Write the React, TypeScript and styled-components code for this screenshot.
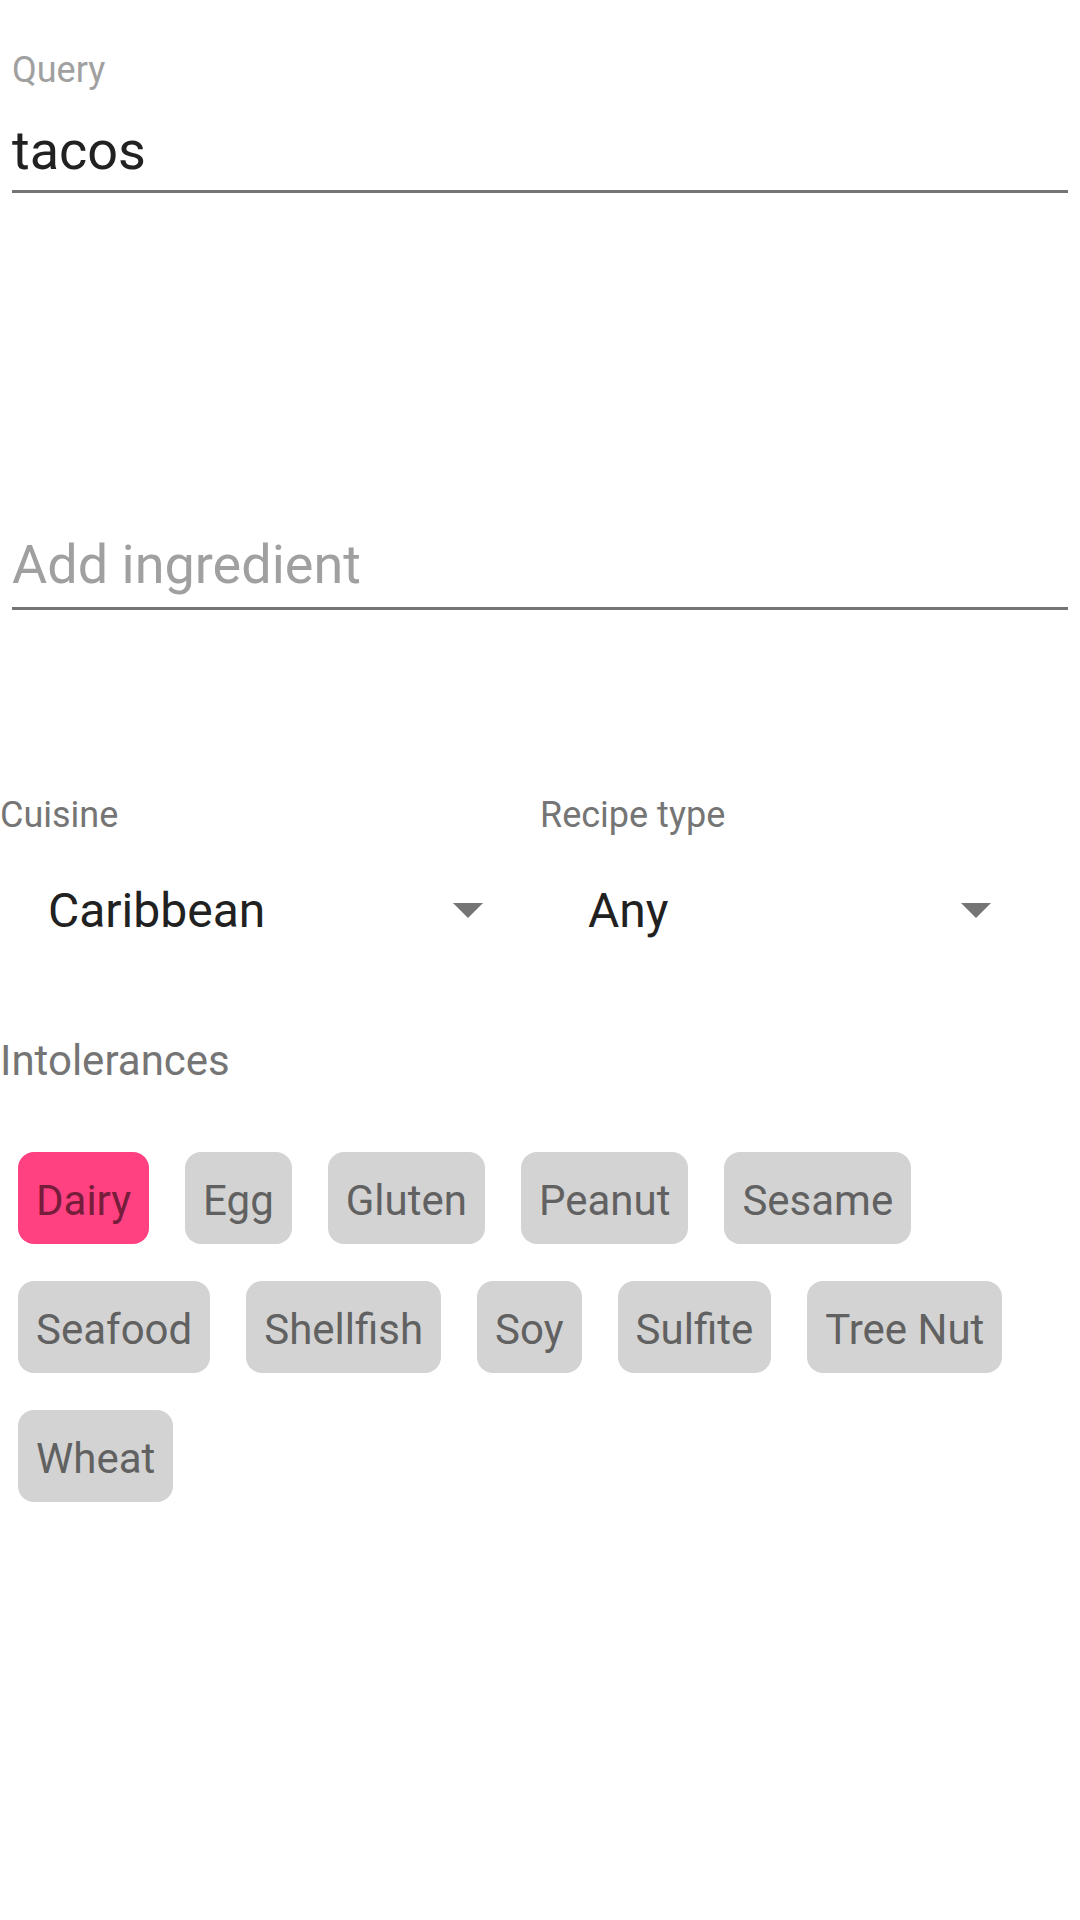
import styled, { createGlobalStyle } from 'styled-components'

const GlobalStyle = createGlobalStyle`
  html, body {
    margin: 0;
    padding: 0;
    background: #fff;
  }
  body {
    font-family: Roboto, "Liberation Sans", sans-serif;
    -webkit-font-smoothing: antialiased;
  }
`

const INTOLERANCES = [
  'Dairy', 'Egg', 'Gluten', 'Peanut', 'Sesame',
  'Seafood', 'Shellfish', 'Soy', 'Sulfite', 'Tree Nut',
  'Wheat',
]

const SELECTED = ['Dairy']

export default function App() {
  return (
    <>
      <GlobalStyle />
      <Page>
        <TextField $gap={46}>
          <FloatingLabel>Query</FloatingLabel>
          <InputBox $offset={25} $bottom={7}>
            <Input readOnly value="tacos" />
          </InputBox>
        </TextField>

        <TextField $gap={340}>
          <InputBox $offset={0} $bottom={10}>
            <Input readOnly placeholder="Add ingredient" />
          </InputBox>
        </TextField>

        <SpinnerRow>
          <SpinnerColumn>
            <SpinnerLabel>Cuisine</SpinnerLabel>
            <Spinner $width={483}>
              <SpinnerValue>Caribbean</SpinnerValue>
              <Caret />
            </Spinner>
          </SpinnerColumn>
          <SpinnerColumn>
            <SpinnerLabel>Recipe type</SpinnerLabel>
            <Spinner $width={451}>
              <SpinnerValue>Any</SpinnerValue>
              <Caret />
            </Spinner>
          </SpinnerColumn>
        </SpinnerRow>

        <SectionLabel>Intolerances</SectionLabel>
        <ChipGroup>
          {INTOLERANCES.map((name) => (
            <Chip key={name} $selected={SELECTED.includes(name)}>{name}</Chip>
          ))}
        </ChipGroup>
      </Page>
    </>
  )
}

function Caret() {
  return (
    <CaretIcon width="30" height="15" viewBox="0 0 30 15" aria-hidden>
      <polygon points="0,0 30,0 15,15" fill="#757575" />
    </CaretIcon>
  )
}

const Page = styled.main`
  display: flex;
  flex-direction: column;
  min-height: 1920px;
  background: #fff;
`

const TextField = styled.div<{ $gap: number }>`
  display: flex;
  flex-direction: column;
  padding: 0 12px;
  margin-top: ${({ $gap }) => $gap}px;
`

const FloatingLabel = styled.label`
  font-size: 36px;
  line-height: 48px;
  color: #a0a0a0;
`

const InputBox = styled.div<{ $offset: number; $bottom: number }>`
  margin-top: ${({ $offset }) => $offset}px;
  padding-bottom: ${({ $bottom }) => $bottom}px;
  border-bottom: 3px solid #757575;
`

const Input = styled.input`
  display: block;
  width: 100%;
  height: 64px;
  padding: 0;
  border: none;
  outline: none;
  background: transparent;
  font-family: Roboto, "Liberation Sans", sans-serif;
  font-size: 54px;
  line-height: 64px;
  color: #212121;

  &::placeholder {
    color: #a0a0a0;
    opacity: 1;
  }
`

const SpinnerRow = styled.div`
  display: grid;
  grid-template-columns: 540px 540px;
  margin-top: 181px;
`

const SpinnerColumn = styled.div`
  display: flex;
  flex-direction: column;
`

const SpinnerLabel = styled.span`
  font-size: 36px;
  line-height: 48px;
  color: #757575;
`

const Spinner = styled.div<{ $width: number }>`
  display: flex;
  align-items: center;
  justify-content: space-between;
  box-sizing: border-box;
  width: ${({ $width }) => $width}px;
  height: 96px;
  margin-top: 29px;
  padding-left: 48px;
`

const SpinnerValue = styled.span`
  margin-bottom: 10px;
  font-size: 48px;
  line-height: 80px;
  color: #212121;
`

const CaretIcon = styled.svg`
  display: block;
  flex: none;
  margin-bottom: 11px;
`

const SectionLabel = styled.span`
  margin-top: 69px;
  font-size: 42px;
  line-height: 56px;
  color: #757575;
`

const ChipGroup = styled.div`
  display: flex;
  flex-wrap: wrap;
  gap: 37px 36px;
  margin-top: 63px;
  padding: 0 18px;
`

const Chip = styled.span<{ $selected: boolean }>`
  padding: 21px 18px 15px;
  border-radius: 16px;
  font-size: 42px;
  line-height: 56px;
  background: ${({ $selected }) => ($selected ? '#ff4081' : '#d3d3d3')};
  color: ${({ $selected }) => ($selected ? '#751d3b' : '#616161')};
`
